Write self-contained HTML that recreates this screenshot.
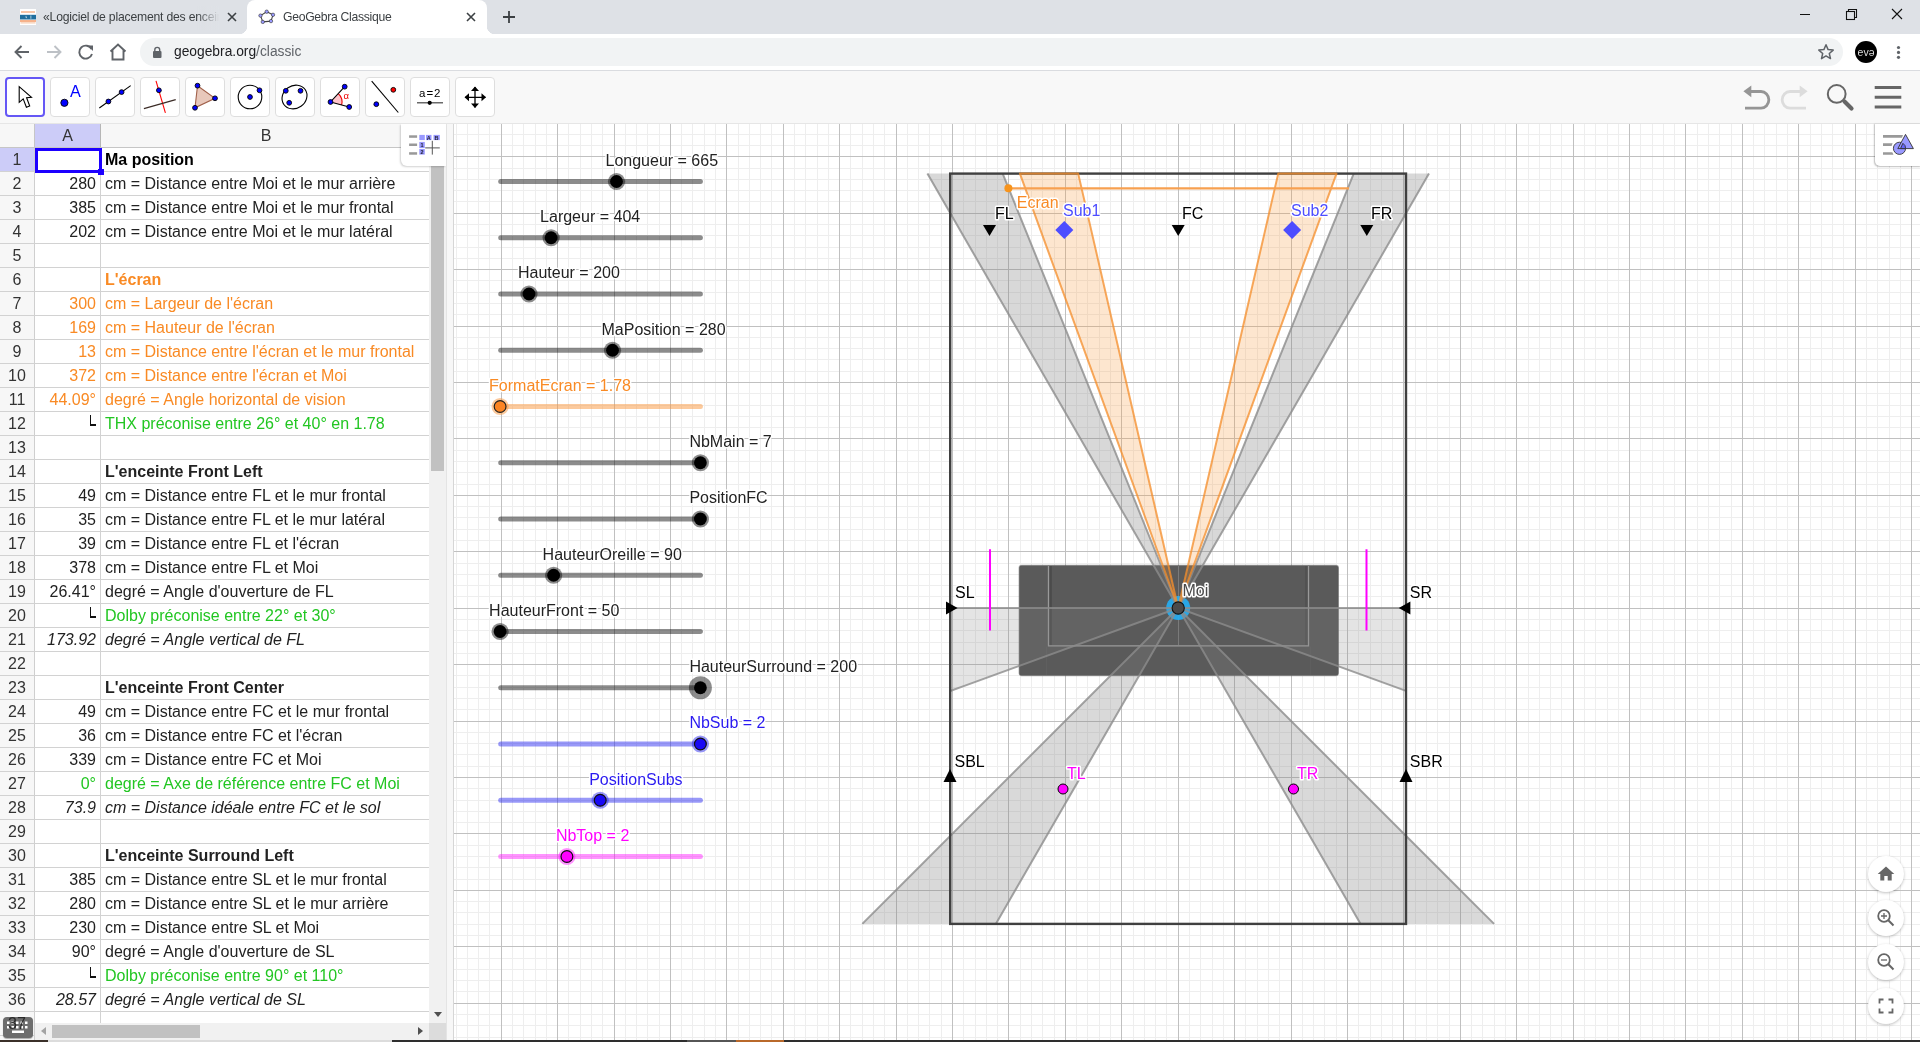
<!DOCTYPE html>
<html><head><meta charset="utf-8"><title>GeoGebra Classique</title>
<style>
html,body{margin:0;padding:0;width:1920px;height:1042px;overflow:hidden;background:#fff;position:relative;font-family:'Liberation Sans', sans-serif}
body>div,body>svg{will-change:transform}
</style></head><body>

<div style="position:absolute;left:0;top:0;width:1920px;height:34px;background:#dee1e6"></div>
<!-- tab1 -->
<svg style="position:absolute;left:20px;top:9px" width="16" height="16" viewBox="0 0 16 16"><rect width="16" height="16" fill="#fff"/><rect x="1" y="2.2" width="14" height="1.6" fill="#f6b894"/><path d="M0 5.8H16V10.5H0Z" fill="#1f6e9e"/><path d="M6 6.5L7.2 9.5L5.4 8.2Z M10.5 6.5H11.3V9.8H10.5Z" fill="#fff" opacity=".8"/><rect x="0" y="11.3" width="16" height="1.4" fill="#f3925a"/><rect x="0.5" y="13.4" width="15" height="1" fill="#f6c09e"/></svg>
<div style="position:absolute;left:43px;top:8px;width:176px;height:18px;overflow:hidden;font:12.2px 'Liberation Sans', sans-serif;color:#3c4043;white-space:nowrap;line-height:18px;letter-spacing:-0.2px">«Logiciel de placement des enceintes</div>
<div style="position:absolute;left:197px;top:6px;width:24px;height:24px;background:linear-gradient(90deg,rgba(222,225,230,0),#dee1e6 92%)"></div>
<svg style="position:absolute;left:225px;top:10px" width="14" height="14" viewBox="0 0 14 14"><path d="M3 3L11 11M11 3L3 11" stroke="#3c4043" stroke-width="1.6"/></svg>
<!-- active tab -->
<div style="position:absolute;left:247px;top:0px;width:240px;height:34px;background:#fff;border-radius:8px 8px 0 0"></div>
<div style="position:absolute;left:239px;top:26px;width:8px;height:8px;background:radial-gradient(circle at 0 0,#dee1e6 8px,#fff 8.5px)"></div>
<div style="position:absolute;left:487px;top:26px;width:8px;height:8px;background:radial-gradient(circle at 100% 0,#dee1e6 8px,#fff 8.5px)"></div>
<svg style="position:absolute;left:258px;top:9px" width="18" height="17" viewBox="0 0 18 17"><path d="M8.7 2.7L15 5.8L13 12.1L4.8 12.9L2.5 6.6Z" fill="none" stroke="#444" stroke-width="1.1" stroke-linejoin="round"/><g fill="#9a9aff" stroke="#333" stroke-width=".6"><circle cx="8.7" cy="2.7" r="1.7"/><circle cx="15" cy="5.8" r="1.7"/><circle cx="13" cy="12.1" r="1.7"/><circle cx="4.8" cy="12.9" r="1.7"/><circle cx="2.5" cy="6.6" r="1.7"/></g></svg>
<div style="position:absolute;left:283px;top:8px;font:12.2px 'Liberation Sans', sans-serif;color:#3c4043;white-space:nowrap;line-height:18px;letter-spacing:-0.3px">GeoGebra Classique</div>
<svg style="position:absolute;left:464px;top:10px" width="14" height="14" viewBox="0 0 14 14"><path d="M3 3L11 11M11 3L3 11" stroke="#3c4043" stroke-width="1.6"/></svg>
<svg style="position:absolute;left:501px;top:9px" width="16" height="16" viewBox="0 0 16 16"><path d="M8 2V14M2 8H14" stroke="#3c4043" stroke-width="1.8"/></svg>
<!-- window controls -->
<svg style="position:absolute;left:1795px;top:8px" width="20" height="20" viewBox="0 0 20 20"><path d="M5 6.5H15" stroke="#111" stroke-width="1"/></svg>
<svg style="position:absolute;left:1841px;top:5px" width="20" height="20" viewBox="0 0 20 20"><rect x="5.5" y="6.5" width="8" height="8" fill="none" stroke="#111" stroke-width="1.1"/><path d="M7.5 6.5V4.5H15.5V12.5H13.5" fill="none" stroke="#111" stroke-width="1.1"/></svg>
<svg style="position:absolute;left:1887px;top:4px" width="20" height="20" viewBox="0 0 20 20"><path d="M5 5L15 15M15 5L5 15" stroke="#111" stroke-width="1.1"/></svg>
<!-- address row -->
<div style="position:absolute;left:0;top:34px;width:1920px;height:36px;background:#fff"></div>
<div style="position:absolute;left:0;top:70px;width:1920px;height:1px;background:#dadce0"></div>
<svg style="position:absolute;left:10px;top:41px" width="24" height="22" viewBox="0 0 24 22"><path d="M19 11H5.5M11.5 5L5.5 11L11.5 17" fill="none" stroke="#5f6368" stroke-width="1.9"/></svg>
<svg style="position:absolute;left:42px;top:41px" width="24" height="22" viewBox="0 0 24 22"><path d="M5 11H18.5M12.5 5L18.5 11L12.5 17" fill="none" stroke="#bdc1c6" stroke-width="1.9"/></svg>
<svg style="position:absolute;left:74px;top:40px" width="24" height="24" viewBox="0 0 24 24"><path d="M17.6 9.2A6.5 6.5 0 1 0 18 14" fill="none" stroke="#5f6368" stroke-width="1.9"/><path d="M13.5 5.5H19V11Z" fill="#5f6368"/></svg>
<svg style="position:absolute;left:106px;top:40px" width="24" height="24" viewBox="0 0 24 24"><path d="M4.5 11.5L12 4.5L19.5 11.5M6.5 10V19.5H17.5V10" fill="none" stroke="#5f6368" stroke-width="1.9"/></svg>
<div style="position:absolute;left:140px;top:38px;width:1703px;height:28px;background:#f1f3f4;border-radius:14px"></div>
<svg style="position:absolute;left:150px;top:45px" width="14" height="14" viewBox="0 0 14 14"><rect x="3" y="6" width="8.5" height="7" rx="1" fill="#5f6368"/><path d="M4.8 6.5V4.8A2.45 2.45 0 0 1 9.7 4.8V6.5" fill="none" stroke="#5f6368" stroke-width="1.4"/></svg>
<div style="position:absolute;left:174px;top:43px;font:13.8px 'Liberation Sans', sans-serif;color:#202124;white-space:nowrap;line-height:18px">geogebra.org<span style="color:#5f6368">/classic</span></div>
<svg style="position:absolute;left:1816px;top:42px" width="20" height="20" viewBox="0 0 20 20"><path d="M10 2.8L12.1 7.6L17.2 8.1L13.3 11.5L14.5 16.6L10 13.9L5.5 16.6L6.7 11.5L2.8 8.1L7.9 7.6Z" fill="none" stroke="#5f6368" stroke-width="1.5" stroke-linejoin="round"/></svg>
<svg style="position:absolute;left:1855px;top:41px" width="22" height="22" viewBox="0 0 22 22"><circle cx="11" cy="11" r="11" fill="#000"/><g font-family="Liberation Sans" font-size="10.5" fill="#dcdcdc"><text x="2.6" y="14.6">e</text><text x="8.4" y="14.6">v</text><text x="-19.6" y="-9.1" transform="scale(-1,-1)">e</text></g></svg>
<svg style="position:absolute;left:1893px;top:42px" width="12" height="20" viewBox="0 0 12 20"><g fill="#5f6368"><circle cx="5.5" cy="5.5" r="1.6"/><circle cx="5.5" cy="10.4" r="1.6"/><circle cx="5.5" cy="15.3" r="1.6"/></g></svg>
<div style="position:absolute;left:0;top:71px;width:1920px;height:52px;background:#f8f8f8"></div><div style="position:absolute;left:0;top:123px;width:1920px;height:1px;background:#e6e6e6"></div><div style="position:absolute;left:5px;top:77px;width:35.5px;height:35.5px;border:2px solid #6557f5;border-radius:4px;background:#fff"></div><div style="position:absolute;left:50px;top:77px;width:37.5px;height:37.5px;border:1px solid #dedede;border-radius:4px;background:#fff"></div><div style="position:absolute;left:95px;top:77px;width:37.5px;height:37.5px;border:1px solid #dedede;border-radius:4px;background:#fff"></div><div style="position:absolute;left:140px;top:77px;width:37.5px;height:37.5px;border:1px solid #dedede;border-radius:4px;background:#fff"></div><div style="position:absolute;left:185px;top:77px;width:37.5px;height:37.5px;border:1px solid #dedede;border-radius:4px;background:#fff"></div><div style="position:absolute;left:230px;top:77px;width:37.5px;height:37.5px;border:1px solid #dedede;border-radius:4px;background:#fff"></div><div style="position:absolute;left:275px;top:77px;width:37.5px;height:37.5px;border:1px solid #dedede;border-radius:4px;background:#fff"></div><div style="position:absolute;left:320px;top:77px;width:37.5px;height:37.5px;border:1px solid #dedede;border-radius:4px;background:#fff"></div><div style="position:absolute;left:365px;top:77px;width:37.5px;height:37.5px;border:1px solid #dedede;border-radius:4px;background:#fff"></div><div style="position:absolute;left:410px;top:77px;width:37.5px;height:37.5px;border:1px solid #dedede;border-radius:4px;background:#fff"></div><div style="position:absolute;left:455px;top:77px;width:37.5px;height:37.5px;border:1px solid #dedede;border-radius:4px;background:#fff"></div><svg style="position:absolute;left:0;top:71px" width="1920" height="52" viewBox="0 71 1920 52"><path d="M19.2 86.6V102.4L23.2 98.9L26.4 107.3L29.7 106L26.6 97.8L31.5 97.4Z" fill="#fff" stroke="#000" stroke-width="1.1" stroke-linejoin="miter"/><circle cx="64.4" cy="102.8" r="3.6" fill="#0000ff" stroke="#000" stroke-width="0.9"/><text x="69.9" y="96.9" font-family="'Liberation Sans', sans-serif" font-size="16.2" fill="#0000ff">A</text><path d="M99.3 108L130.7 85.6" stroke="#000" stroke-width="1.1"/><circle cx="108.4" cy="101.5" r="2.4" fill="#0000ff" stroke="#000" stroke-width="0.9"/><circle cx="121.6" cy="92.1" r="2.4" fill="#0000ff" stroke="#000" stroke-width="0.9"/><path d="M156 80.9L165.4 112.8" stroke="#ff0000" stroke-width="1.1"/><path d="M143.9 108.6L175.7 99.6" stroke="#3a2a25" stroke-width="1.1"/><circle cx="158.9" cy="90.3" r="2.4" fill="#0000ff" stroke="#000" stroke-width="0.9"/><path d="M197.5 85.7L215 98.3L195 107.8Z" fill="#e8c8bb" stroke="#a0604a" stroke-width="1.1"/><circle cx="197.5" cy="85.7" r="2.4" fill="#0000ff" stroke="#000" stroke-width="0.9"/><circle cx="215" cy="98.3" r="2.4" fill="#0000ff" stroke="#000" stroke-width="0.9"/><circle cx="195" cy="107.8" r="2.4" fill="#0000ff" stroke="#000" stroke-width="0.9"/><circle cx="250" cy="97" r="11.8" fill="none" stroke="#000" stroke-width="1.1"/><circle cx="250" cy="97" r="2.4" fill="#0000ff" stroke="#000" stroke-width="0.9"/><circle cx="259.5" cy="90.3" r="2.4" fill="#0000ff" stroke="#000" stroke-width="0.9"/><ellipse cx="294.5" cy="97" rx="13" ry="11.3" transform="rotate(-35 294.5 97)" fill="none" stroke="#000" stroke-width="1.1"/><circle cx="285.8" cy="90.8" r="2.4" fill="#0000ff" stroke="#000" stroke-width="0.9"/><circle cx="300.5" cy="90.8" r="2.4" fill="#0000ff" stroke="#000" stroke-width="0.9"/><circle cx="289.2" cy="102.8" r="2.4" fill="#0000ff" stroke="#000" stroke-width="0.9"/><path d="M330.5 102L338.3 93.6A11.5 11.5 0 0 1 341.6 105Z" fill="#ffc4cc"/><path d="M338.3 93.6A11.5 11.5 0 0 1 341.6 105" fill="none" stroke="#e00" stroke-width="1.1"/><path d="M344.7 86.7L330.5 102L349.2 107" fill="none" stroke="#000" stroke-width="1.1"/><circle cx="344.7" cy="86.7" r="2.4" fill="#0000ff" stroke="#000" stroke-width="0.9"/><circle cx="330.5" cy="102" r="2.4" fill="#0000ff" stroke="#000" stroke-width="0.9"/><circle cx="349.2" cy="107" r="2.4" fill="#0000ff" stroke="#000" stroke-width="0.9"/><text x="343.6" y="98.8" font-family="'Liberation Sans', sans-serif" font-size="9.5" fill="#e00">α</text><path d="M371.7 81.2L398.3 112.5" stroke="#000" stroke-width="1.1"/><circle cx="376.3" cy="104.2" r="2.4" fill="#0000ff" stroke="#000" stroke-width="0.9"/><circle cx="393.3" cy="89.8" r="2.4" fill="#ff0000" stroke="#000" stroke-width="0.9"/><text x="419" y="96.5" font-family="'Liberation Sans', sans-serif" font-size="11.5" fill="#000">a</text><text x="426.5" y="96.5" font-family="'Liberation Sans', sans-serif" font-size="11.5" fill="#000">=</text><text x="434" y="96.5" font-family="'Liberation Sans', sans-serif" font-size="11.5" fill="#000">2</text><path d="M417 102.8H443" stroke="#444" stroke-width="1.2"/><circle cx="429.7" cy="102.8" r="2.1" fill="#000"/><path d="M475 87V107.5M465 97.3H485.5" stroke="#000" stroke-width="1.3"/><path d="M475 86.5L471 91H479Z M475 108L471 103.5H479Z M464.5 97.3L469 93.3V101.3Z M486 97.3L481.5 93.3V101.3Z" fill="#000"/><path d="M1750 91.5H1761A7.8 8.3 0 0 1 1761 108.2H1745" fill="none" stroke="#959595" stroke-width="2.8"/><path d="M1743.4 91.3L1751.3 85.5V97.3Z" fill="#959595"/><path d="M1801 91.5H1790A7.8 8.3 0 0 0 1790 108.2H1806" fill="none" stroke="#dcdcdc" stroke-width="2.8"/><path d="M1807.6 91.3L1799.7 85.5V97.3Z" fill="#dcdcdc"/><circle cx="1836.7" cy="93.9" r="8.9" fill="none" stroke="#666" stroke-width="2"/><path d="M1844.5 101.5L1851.5 108.5" stroke="#666" stroke-width="4.2" stroke-linecap="round"/><path d="M1874.7 87.6H1901.3M1874.7 97.3H1901.3M1874.7 107.1H1901.3" stroke="#666" stroke-width="3"/></svg><div style="position:absolute;left:0;top:124px;width:454px;height:916px;background:#fff;overflow:hidden"><div style="position:absolute;left:0;top:0;width:429px;height:23px;background:#f7f7f7"></div><div style="position:absolute;left:35px;top:0;width:65px;height:23px;background:#ccccf8"></div><div style="position:absolute;left:0;top:23px;width:429px;height:1px;background:#c6c6c6"></div><div style="position:absolute;left:34px;top:0;width:1px;height:23px;background:#c6c6c6"></div><div style="position:absolute;left:100px;top:0;width:1px;height:23px;background:#b6b6b6"></div><div style="position:absolute;left:35px;top:0;width:65px;height:23px;font:16px 'Liberation Sans', sans-serif;color:#333;text-align:center;line-height:23px">A</div><div style="position:absolute;left:101px;top:0;width:330px;height:23px;font:16px 'Liberation Sans', sans-serif;color:#333;text-align:center;line-height:23px">B</div><div style="position:absolute;left:0;top:24px;width:34px;height:900px;background:#f7f7f7"></div><div style="position:absolute;left:0;top:24px;width:34px;height:23px;background:#ccccf8"></div><div style="position:absolute;left:34px;top:24px;width:1px;height:900px;background:#cfcfcf"></div><div style="position:absolute;left:100px;top:24px;width:1px;height:900px;background:#d2d2d2"></div><div style="position:absolute;left:0;top:47px;width:429px;height:1px;background:#d2d2d2"></div><div style="position:absolute;left:0;top:24px;width:34px;height:23px;font:16px 'Liberation Sans', sans-serif;color:#333;text-align:center;line-height:24px">1</div><div style="position:absolute;left:105px;top:24px;height:23px;font:16px 'Liberation Sans', sans-serif;font-weight:bold;color:#000;line-height:24px;white-space:nowrap">Ma position</div><div style="position:absolute;left:0;top:71px;width:429px;height:1px;background:#d2d2d2"></div><div style="position:absolute;left:0;top:48px;width:34px;height:23px;font:16px 'Liberation Sans', sans-serif;color:#333;text-align:center;line-height:24px">2</div><div style="position:absolute;left:35px;top:48px;width:61px;height:23px;font:16px 'Liberation Sans', sans-serif;color:#222;text-align:right;line-height:24px;white-space:nowrap">280</div><div style="position:absolute;left:105px;top:48px;height:23px;font:16px 'Liberation Sans', sans-serif;color:#222;line-height:24px;white-space:nowrap">cm = Distance entre Moi et le mur arrière</div><div style="position:absolute;left:0;top:95px;width:429px;height:1px;background:#d2d2d2"></div><div style="position:absolute;left:0;top:72px;width:34px;height:23px;font:16px 'Liberation Sans', sans-serif;color:#333;text-align:center;line-height:24px">3</div><div style="position:absolute;left:35px;top:72px;width:61px;height:23px;font:16px 'Liberation Sans', sans-serif;color:#222;text-align:right;line-height:24px;white-space:nowrap">385</div><div style="position:absolute;left:105px;top:72px;height:23px;font:16px 'Liberation Sans', sans-serif;color:#222;line-height:24px;white-space:nowrap">cm = Distance entre Moi et le mur frontal</div><div style="position:absolute;left:0;top:119px;width:429px;height:1px;background:#d2d2d2"></div><div style="position:absolute;left:0;top:96px;width:34px;height:23px;font:16px 'Liberation Sans', sans-serif;color:#333;text-align:center;line-height:24px">4</div><div style="position:absolute;left:35px;top:96px;width:61px;height:23px;font:16px 'Liberation Sans', sans-serif;color:#222;text-align:right;line-height:24px;white-space:nowrap">202</div><div style="position:absolute;left:105px;top:96px;height:23px;font:16px 'Liberation Sans', sans-serif;color:#222;line-height:24px;white-space:nowrap">cm = Distance entre Moi et le mur latéral</div><div style="position:absolute;left:0;top:143px;width:429px;height:1px;background:#d2d2d2"></div><div style="position:absolute;left:0;top:120px;width:34px;height:23px;font:16px 'Liberation Sans', sans-serif;color:#333;text-align:center;line-height:24px">5</div><div style="position:absolute;left:0;top:167px;width:429px;height:1px;background:#d2d2d2"></div><div style="position:absolute;left:0;top:144px;width:34px;height:23px;font:16px 'Liberation Sans', sans-serif;color:#333;text-align:center;line-height:24px">6</div><div style="position:absolute;left:105px;top:144px;height:23px;font:16px 'Liberation Sans', sans-serif;font-weight:bold;color:#f98a24;line-height:24px;white-space:nowrap">L'écran</div><div style="position:absolute;left:0;top:191px;width:429px;height:1px;background:#d2d2d2"></div><div style="position:absolute;left:0;top:168px;width:34px;height:23px;font:16px 'Liberation Sans', sans-serif;color:#333;text-align:center;line-height:24px">7</div><div style="position:absolute;left:35px;top:168px;width:61px;height:23px;font:16px 'Liberation Sans', sans-serif;color:#f98a24;text-align:right;line-height:24px;white-space:nowrap">300</div><div style="position:absolute;left:105px;top:168px;height:23px;font:16px 'Liberation Sans', sans-serif;color:#f98a24;line-height:24px;white-space:nowrap">cm = Largeur de l'écran</div><div style="position:absolute;left:0;top:215px;width:429px;height:1px;background:#d2d2d2"></div><div style="position:absolute;left:0;top:192px;width:34px;height:23px;font:16px 'Liberation Sans', sans-serif;color:#333;text-align:center;line-height:24px">8</div><div style="position:absolute;left:35px;top:192px;width:61px;height:23px;font:16px 'Liberation Sans', sans-serif;color:#f98a24;text-align:right;line-height:24px;white-space:nowrap">169</div><div style="position:absolute;left:105px;top:192px;height:23px;font:16px 'Liberation Sans', sans-serif;color:#f98a24;line-height:24px;white-space:nowrap">cm = Hauteur de l'écran</div><div style="position:absolute;left:0;top:239px;width:429px;height:1px;background:#d2d2d2"></div><div style="position:absolute;left:0;top:216px;width:34px;height:23px;font:16px 'Liberation Sans', sans-serif;color:#333;text-align:center;line-height:24px">9</div><div style="position:absolute;left:35px;top:216px;width:61px;height:23px;font:16px 'Liberation Sans', sans-serif;color:#f98a24;text-align:right;line-height:24px;white-space:nowrap">13</div><div style="position:absolute;left:105px;top:216px;height:23px;font:16px 'Liberation Sans', sans-serif;color:#f98a24;line-height:24px;white-space:nowrap">cm = Distance entre l'écran et le mur frontal</div><div style="position:absolute;left:0;top:263px;width:429px;height:1px;background:#d2d2d2"></div><div style="position:absolute;left:0;top:240px;width:34px;height:23px;font:16px 'Liberation Sans', sans-serif;color:#333;text-align:center;line-height:24px">10</div><div style="position:absolute;left:35px;top:240px;width:61px;height:23px;font:16px 'Liberation Sans', sans-serif;color:#f98a24;text-align:right;line-height:24px;white-space:nowrap">372</div><div style="position:absolute;left:105px;top:240px;height:23px;font:16px 'Liberation Sans', sans-serif;color:#f98a24;line-height:24px;white-space:nowrap">cm = Distance entre l'écran et Moi</div><div style="position:absolute;left:0;top:287px;width:429px;height:1px;background:#d2d2d2"></div><div style="position:absolute;left:0;top:264px;width:34px;height:23px;font:16px 'Liberation Sans', sans-serif;color:#333;text-align:center;line-height:24px">11</div><div style="position:absolute;left:35px;top:264px;width:61px;height:23px;font:16px 'Liberation Sans', sans-serif;color:#f98a24;text-align:right;line-height:24px;white-space:nowrap">44.09°</div><div style="position:absolute;left:105px;top:264px;height:23px;font:16px 'Liberation Sans', sans-serif;color:#f98a24;line-height:24px;white-space:nowrap">degré = Angle horizontal de vision</div><div style="position:absolute;left:0;top:311px;width:429px;height:1px;background:#d2d2d2"></div><div style="position:absolute;left:0;top:288px;width:34px;height:23px;font:16px 'Liberation Sans', sans-serif;color:#333;text-align:center;line-height:24px">12</div><div style="position:absolute;left:89.7px;top:291px;width:1.6px;height:10.5px;background:#111"></div><div style="position:absolute;left:89.7px;top:300px;width:6.3px;height:1.6px;background:#111"></div><div style="position:absolute;left:105px;top:288px;height:23px;font:16px 'Liberation Sans', sans-serif;color:#22c622;line-height:24px;white-space:nowrap">THX préconise entre 26° et 40° en 1.78</div><div style="position:absolute;left:0;top:335px;width:429px;height:1px;background:#d2d2d2"></div><div style="position:absolute;left:0;top:312px;width:34px;height:23px;font:16px 'Liberation Sans', sans-serif;color:#333;text-align:center;line-height:24px">13</div><div style="position:absolute;left:0;top:359px;width:429px;height:1px;background:#d2d2d2"></div><div style="position:absolute;left:0;top:336px;width:34px;height:23px;font:16px 'Liberation Sans', sans-serif;color:#333;text-align:center;line-height:24px">14</div><div style="position:absolute;left:105px;top:336px;height:23px;font:16px 'Liberation Sans', sans-serif;font-weight:bold;color:#222;line-height:24px;white-space:nowrap">L'enceinte Front Left</div><div style="position:absolute;left:0;top:383px;width:429px;height:1px;background:#d2d2d2"></div><div style="position:absolute;left:0;top:360px;width:34px;height:23px;font:16px 'Liberation Sans', sans-serif;color:#333;text-align:center;line-height:24px">15</div><div style="position:absolute;left:35px;top:360px;width:61px;height:23px;font:16px 'Liberation Sans', sans-serif;color:#222;text-align:right;line-height:24px;white-space:nowrap">49</div><div style="position:absolute;left:105px;top:360px;height:23px;font:16px 'Liberation Sans', sans-serif;color:#222;line-height:24px;white-space:nowrap">cm = Distance entre FL et le mur frontal</div><div style="position:absolute;left:0;top:407px;width:429px;height:1px;background:#d2d2d2"></div><div style="position:absolute;left:0;top:384px;width:34px;height:23px;font:16px 'Liberation Sans', sans-serif;color:#333;text-align:center;line-height:24px">16</div><div style="position:absolute;left:35px;top:384px;width:61px;height:23px;font:16px 'Liberation Sans', sans-serif;color:#222;text-align:right;line-height:24px;white-space:nowrap">35</div><div style="position:absolute;left:105px;top:384px;height:23px;font:16px 'Liberation Sans', sans-serif;color:#222;line-height:24px;white-space:nowrap">cm = Distance entre FL et le mur latéral</div><div style="position:absolute;left:0;top:431px;width:429px;height:1px;background:#d2d2d2"></div><div style="position:absolute;left:0;top:408px;width:34px;height:23px;font:16px 'Liberation Sans', sans-serif;color:#333;text-align:center;line-height:24px">17</div><div style="position:absolute;left:35px;top:408px;width:61px;height:23px;font:16px 'Liberation Sans', sans-serif;color:#222;text-align:right;line-height:24px;white-space:nowrap">39</div><div style="position:absolute;left:105px;top:408px;height:23px;font:16px 'Liberation Sans', sans-serif;color:#222;line-height:24px;white-space:nowrap">cm = Distance entre FL et l'écran</div><div style="position:absolute;left:0;top:455px;width:429px;height:1px;background:#d2d2d2"></div><div style="position:absolute;left:0;top:432px;width:34px;height:23px;font:16px 'Liberation Sans', sans-serif;color:#333;text-align:center;line-height:24px">18</div><div style="position:absolute;left:35px;top:432px;width:61px;height:23px;font:16px 'Liberation Sans', sans-serif;color:#222;text-align:right;line-height:24px;white-space:nowrap">378</div><div style="position:absolute;left:105px;top:432px;height:23px;font:16px 'Liberation Sans', sans-serif;color:#222;line-height:24px;white-space:nowrap">cm = Distance entre FL et Moi</div><div style="position:absolute;left:0;top:479px;width:429px;height:1px;background:#d2d2d2"></div><div style="position:absolute;left:0;top:456px;width:34px;height:23px;font:16px 'Liberation Sans', sans-serif;color:#333;text-align:center;line-height:24px">19</div><div style="position:absolute;left:35px;top:456px;width:61px;height:23px;font:16px 'Liberation Sans', sans-serif;color:#222;text-align:right;line-height:24px;white-space:nowrap">26.41°</div><div style="position:absolute;left:105px;top:456px;height:23px;font:16px 'Liberation Sans', sans-serif;color:#222;line-height:24px;white-space:nowrap">degré = Angle d'ouverture de FL</div><div style="position:absolute;left:0;top:503px;width:429px;height:1px;background:#d2d2d2"></div><div style="position:absolute;left:0;top:480px;width:34px;height:23px;font:16px 'Liberation Sans', sans-serif;color:#333;text-align:center;line-height:24px">20</div><div style="position:absolute;left:89.7px;top:483px;width:1.6px;height:10.5px;background:#111"></div><div style="position:absolute;left:89.7px;top:492px;width:6.3px;height:1.6px;background:#111"></div><div style="position:absolute;left:105px;top:480px;height:23px;font:16px 'Liberation Sans', sans-serif;color:#22c622;line-height:24px;white-space:nowrap">Dolby préconise entre 22° et 30°</div><div style="position:absolute;left:0;top:527px;width:429px;height:1px;background:#d2d2d2"></div><div style="position:absolute;left:0;top:504px;width:34px;height:23px;font:16px 'Liberation Sans', sans-serif;color:#333;text-align:center;line-height:24px">21</div><div style="position:absolute;left:35px;top:504px;width:61px;height:23px;font:16px 'Liberation Sans', sans-serif;font-style:italic;color:#222;text-align:right;line-height:24px;white-space:nowrap">173.92</div><div style="position:absolute;left:105px;top:504px;height:23px;font:16px 'Liberation Sans', sans-serif;font-style:italic;color:#222;line-height:24px;white-space:nowrap">degré = Angle vertical de FL</div><div style="position:absolute;left:0;top:551px;width:429px;height:1px;background:#d2d2d2"></div><div style="position:absolute;left:0;top:528px;width:34px;height:23px;font:16px 'Liberation Sans', sans-serif;color:#333;text-align:center;line-height:24px">22</div><div style="position:absolute;left:0;top:575px;width:429px;height:1px;background:#d2d2d2"></div><div style="position:absolute;left:0;top:552px;width:34px;height:23px;font:16px 'Liberation Sans', sans-serif;color:#333;text-align:center;line-height:24px">23</div><div style="position:absolute;left:105px;top:552px;height:23px;font:16px 'Liberation Sans', sans-serif;font-weight:bold;color:#222;line-height:24px;white-space:nowrap">L'enceinte Front Center</div><div style="position:absolute;left:0;top:599px;width:429px;height:1px;background:#d2d2d2"></div><div style="position:absolute;left:0;top:576px;width:34px;height:23px;font:16px 'Liberation Sans', sans-serif;color:#333;text-align:center;line-height:24px">24</div><div style="position:absolute;left:35px;top:576px;width:61px;height:23px;font:16px 'Liberation Sans', sans-serif;color:#222;text-align:right;line-height:24px;white-space:nowrap">49</div><div style="position:absolute;left:105px;top:576px;height:23px;font:16px 'Liberation Sans', sans-serif;color:#222;line-height:24px;white-space:nowrap">cm = Distance entre FC et le mur frontal</div><div style="position:absolute;left:0;top:623px;width:429px;height:1px;background:#d2d2d2"></div><div style="position:absolute;left:0;top:600px;width:34px;height:23px;font:16px 'Liberation Sans', sans-serif;color:#333;text-align:center;line-height:24px">25</div><div style="position:absolute;left:35px;top:600px;width:61px;height:23px;font:16px 'Liberation Sans', sans-serif;color:#222;text-align:right;line-height:24px;white-space:nowrap">36</div><div style="position:absolute;left:105px;top:600px;height:23px;font:16px 'Liberation Sans', sans-serif;color:#222;line-height:24px;white-space:nowrap">cm = Distance entre FC et l'écran</div><div style="position:absolute;left:0;top:647px;width:429px;height:1px;background:#d2d2d2"></div><div style="position:absolute;left:0;top:624px;width:34px;height:23px;font:16px 'Liberation Sans', sans-serif;color:#333;text-align:center;line-height:24px">26</div><div style="position:absolute;left:35px;top:624px;width:61px;height:23px;font:16px 'Liberation Sans', sans-serif;color:#222;text-align:right;line-height:24px;white-space:nowrap">339</div><div style="position:absolute;left:105px;top:624px;height:23px;font:16px 'Liberation Sans', sans-serif;color:#222;line-height:24px;white-space:nowrap">cm = Distance entre FC et Moi</div><div style="position:absolute;left:0;top:671px;width:429px;height:1px;background:#d2d2d2"></div><div style="position:absolute;left:0;top:648px;width:34px;height:23px;font:16px 'Liberation Sans', sans-serif;color:#333;text-align:center;line-height:24px">27</div><div style="position:absolute;left:35px;top:648px;width:61px;height:23px;font:16px 'Liberation Sans', sans-serif;color:#22c622;text-align:right;line-height:24px;white-space:nowrap">0°</div><div style="position:absolute;left:105px;top:648px;height:23px;font:16px 'Liberation Sans', sans-serif;color:#22c622;line-height:24px;white-space:nowrap">degré = Axe de référence entre FC et Moi</div><div style="position:absolute;left:0;top:695px;width:429px;height:1px;background:#d2d2d2"></div><div style="position:absolute;left:0;top:672px;width:34px;height:23px;font:16px 'Liberation Sans', sans-serif;color:#333;text-align:center;line-height:24px">28</div><div style="position:absolute;left:35px;top:672px;width:61px;height:23px;font:16px 'Liberation Sans', sans-serif;font-style:italic;color:#222;text-align:right;line-height:24px;white-space:nowrap">73.9</div><div style="position:absolute;left:105px;top:672px;height:23px;font:16px 'Liberation Sans', sans-serif;font-style:italic;color:#222;line-height:24px;white-space:nowrap">cm = Distance idéale entre FC et le sol</div><div style="position:absolute;left:0;top:719px;width:429px;height:1px;background:#d2d2d2"></div><div style="position:absolute;left:0;top:696px;width:34px;height:23px;font:16px 'Liberation Sans', sans-serif;color:#333;text-align:center;line-height:24px">29</div><div style="position:absolute;left:0;top:743px;width:429px;height:1px;background:#d2d2d2"></div><div style="position:absolute;left:0;top:720px;width:34px;height:23px;font:16px 'Liberation Sans', sans-serif;color:#333;text-align:center;line-height:24px">30</div><div style="position:absolute;left:105px;top:720px;height:23px;font:16px 'Liberation Sans', sans-serif;font-weight:bold;color:#222;line-height:24px;white-space:nowrap">L'enceinte Surround Left</div><div style="position:absolute;left:0;top:767px;width:429px;height:1px;background:#d2d2d2"></div><div style="position:absolute;left:0;top:744px;width:34px;height:23px;font:16px 'Liberation Sans', sans-serif;color:#333;text-align:center;line-height:24px">31</div><div style="position:absolute;left:35px;top:744px;width:61px;height:23px;font:16px 'Liberation Sans', sans-serif;color:#222;text-align:right;line-height:24px;white-space:nowrap">385</div><div style="position:absolute;left:105px;top:744px;height:23px;font:16px 'Liberation Sans', sans-serif;color:#222;line-height:24px;white-space:nowrap">cm = Distance entre SL et le mur frontal</div><div style="position:absolute;left:0;top:791px;width:429px;height:1px;background:#d2d2d2"></div><div style="position:absolute;left:0;top:768px;width:34px;height:23px;font:16px 'Liberation Sans', sans-serif;color:#333;text-align:center;line-height:24px">32</div><div style="position:absolute;left:35px;top:768px;width:61px;height:23px;font:16px 'Liberation Sans', sans-serif;color:#222;text-align:right;line-height:24px;white-space:nowrap">280</div><div style="position:absolute;left:105px;top:768px;height:23px;font:16px 'Liberation Sans', sans-serif;color:#222;line-height:24px;white-space:nowrap">cm = Distance entre SL et le mur arrière</div><div style="position:absolute;left:0;top:815px;width:429px;height:1px;background:#d2d2d2"></div><div style="position:absolute;left:0;top:792px;width:34px;height:23px;font:16px 'Liberation Sans', sans-serif;color:#333;text-align:center;line-height:24px">33</div><div style="position:absolute;left:35px;top:792px;width:61px;height:23px;font:16px 'Liberation Sans', sans-serif;color:#222;text-align:right;line-height:24px;white-space:nowrap">230</div><div style="position:absolute;left:105px;top:792px;height:23px;font:16px 'Liberation Sans', sans-serif;color:#222;line-height:24px;white-space:nowrap">cm = Distance entre SL et Moi</div><div style="position:absolute;left:0;top:839px;width:429px;height:1px;background:#d2d2d2"></div><div style="position:absolute;left:0;top:816px;width:34px;height:23px;font:16px 'Liberation Sans', sans-serif;color:#333;text-align:center;line-height:24px">34</div><div style="position:absolute;left:35px;top:816px;width:61px;height:23px;font:16px 'Liberation Sans', sans-serif;color:#222;text-align:right;line-height:24px;white-space:nowrap">90°</div><div style="position:absolute;left:105px;top:816px;height:23px;font:16px 'Liberation Sans', sans-serif;color:#222;line-height:24px;white-space:nowrap">degré = Angle d'ouverture de SL</div><div style="position:absolute;left:0;top:863px;width:429px;height:1px;background:#d2d2d2"></div><div style="position:absolute;left:0;top:840px;width:34px;height:23px;font:16px 'Liberation Sans', sans-serif;color:#333;text-align:center;line-height:24px">35</div><div style="position:absolute;left:89.7px;top:843px;width:1.6px;height:10.5px;background:#111"></div><div style="position:absolute;left:89.7px;top:852px;width:6.3px;height:1.6px;background:#111"></div><div style="position:absolute;left:105px;top:840px;height:23px;font:16px 'Liberation Sans', sans-serif;color:#22c622;line-height:24px;white-space:nowrap">Dolby préconise entre 90° et 110°</div><div style="position:absolute;left:0;top:887px;width:429px;height:1px;background:#d2d2d2"></div><div style="position:absolute;left:0;top:864px;width:34px;height:23px;font:16px 'Liberation Sans', sans-serif;color:#333;text-align:center;line-height:24px">36</div><div style="position:absolute;left:35px;top:864px;width:61px;height:23px;font:16px 'Liberation Sans', sans-serif;font-style:italic;color:#222;text-align:right;line-height:24px;white-space:nowrap">28.57</div><div style="position:absolute;left:105px;top:864px;height:23px;font:16px 'Liberation Sans', sans-serif;font-style:italic;color:#222;line-height:24px;white-space:nowrap">degré = Angle vertical de SL</div><div style="position:absolute;left:0;top:911px;width:429px;height:1px;background:#d2d2d2"></div><div style="position:absolute;left:0;top:888px;width:34px;height:23px;font:16px 'Liberation Sans', sans-serif;color:#333;text-align:center;line-height:24px">37</div><div style="position:absolute;left:35px;top:24px;width:61px;height:19px;border:3px solid #1d00ff"></div><div style="position:absolute;left:98px;top:45px;width:6px;height:6px;background:#1d00ff"></div><div style="position:absolute;left:429px;top:24px;width:17px;height:900px;background:#f1f1f1"></div><div style="position:absolute;left:431px;top:42px;width:13px;height:305px;background:#c1c1c1"></div><div style="position:absolute;left:433.5px;top:887.5px;width:0;height:0;border-left:4.5px solid transparent;border-right:4.5px solid transparent;border-top:5px solid #505050"></div><div style="position:absolute;left:35px;top:899px;width:394px;height:17px;background:#f1f1f1"></div><div style="position:absolute;left:52px;top:901px;width:148px;height:12.5px;background:#c1c1c1"></div><div style="position:absolute;left:41px;top:903px;width:0;height:0;border-top:4.5px solid transparent;border-bottom:4.5px solid transparent;border-right:5px solid #a3a3a3"></div><div style="position:absolute;left:418px;top:903px;width:0;height:0;border-top:4.5px solid transparent;border-bottom:4.5px solid transparent;border-left:5px solid #505050"></div><div style="position:absolute;left:429px;top:899px;width:17px;height:17px;background:#dcdcdc"></div><div style="position:absolute;left:446px;top:0;width:8px;height:916px;background:#f7f7f7;border-left:1px solid #e4e4e4;border-right:1px solid #d6d6d6;box-sizing:border-box"></div><div style="position:absolute;left:401px;top:0;width:45px;height:42px;background:#fff;border-radius:0 0 0 6px;box-shadow:-1px 1px 2px rgba(0,0,0,.18)"></div><svg style="position:absolute;left:401px;top:0" width="45" height="42" viewBox="0 0 45 42"><g fill="#999"><rect x="8.1" y="11.3" width="8" height="2.5"/><rect x="8.1" y="19.5" width="8" height="2.5"/><rect x="8.1" y="28.2" width="8" height="2.5"/></g><g fill="#9999ff"><rect x="18.3" y="10.9" width="5.5" height="5.2"/><rect x="25" y="10.9" width="5.5" height="5.2"/><rect x="32.5" y="10.9" width="6.3" height="5.2"/><rect x="18.3" y="17.9" width="5.5" height="6.2"/><rect x="18.3" y="25" width="5.5" height="5.6"/></g><g font-family="Liberation Sans" font-weight="bold" font-size="5.5" fill="#223" text-anchor="middle"><text x="27.8" y="15.6">A</text><text x="35.6" y="15.6">B</text><text x="21" y="23">1</text><text x="21" y="30">2</text></g><path d="M24.2 23.9H38.8M31.3 16.8V30.6" stroke="#555" stroke-width="1"/></svg><div style="position:absolute;left:3px;top:893px;width:30px;height:21px;background:#6d6d6d;border-radius:4px;box-shadow:0 1px 1px rgba(0,0,0,.3)"></div><svg style="position:absolute;left:3px;top:893px" width="30" height="21" viewBox="0 0 30 21"><g fill="#fff"><rect x="4" y="4.5" width="2.5" height="2.5"/><rect x="8.5" y="4.5" width="2.5" height="2.5"/><rect x="13" y="4.5" width="2.5" height="2.5"/><rect x="17.5" y="4.5" width="2.5" height="2.5"/><rect x="22" y="4.5" width="2.5" height="2.5"/><rect x="4" y="9" width="2.5" height="2.5"/><rect x="8.5" y="9" width="2.5" height="2.5"/><rect x="13" y="9" width="2.5" height="2.5"/><rect x="17.5" y="9" width="2.5" height="2.5"/><rect x="22" y="9" width="2.5" height="2.5"/><rect x="9" y="13.5" width="12" height="2.5"/></g></svg><div style="position:absolute;left:0;top:888px;width:34px;height:23px;font:16px 'Liberation Sans', sans-serif;color:#222;text-align:center;line-height:24px;opacity:.9">37</div></div><svg style="position:absolute;left:454px;top:124px" width="1466" height="916" viewBox="454 124 1466 916"><rect x="454" y="124" width="1466" height="916" fill="#fff"/><path d="M456.5 124V1040M467.5 124V1040M478.5 124V1040M489.5 124V1040M512.5 124V1040M523.5 124V1040M535.5 124V1040M546.5 124V1040M568.5 124V1040M580.5 124V1040M591.5 124V1040M602.5 124V1040M625.5 124V1040M636.5 124V1040M647.5 124V1040M659.5 124V1040M681.5 124V1040M692.5 124V1040M704.5 124V1040M715.5 124V1040M738.5 124V1040M749.5 124V1040M760.5 124V1040M771.5 124V1040M794.5 124V1040M805.5 124V1040M817.5 124V1040M828.5 124V1040M850.5 124V1040M862.5 124V1040M873.5 124V1040M884.5 124V1040M907.5 124V1040M918.5 124V1040M929.5 124V1040M941.5 124V1040M963.5 124V1040M975.5 124V1040M986.5 124V1040M997.5 124V1040M1020.5 124V1040M1031.5 124V1040M1042.5 124V1040M1054.5 124V1040M1076.5 124V1040M1087.5 124V1040M1099.5 124V1040M1110.5 124V1040M1133.5 124V1040M1144.5 124V1040M1155.5 124V1040M1166.5 124V1040M1189.5 124V1040M1200.5 124V1040M1212.5 124V1040M1223.5 124V1040M1245.5 124V1040M1257.5 124V1040M1268.5 124V1040M1279.5 124V1040M1302.5 124V1040M1313.5 124V1040M1324.5 124V1040M1336.5 124V1040M1358.5 124V1040M1370.5 124V1040M1381.5 124V1040M1392.5 124V1040M1415.5 124V1040M1426.5 124V1040M1437.5 124V1040M1449.5 124V1040M1471.5 124V1040M1482.5 124V1040M1494.5 124V1040M1505.5 124V1040M1528.5 124V1040M1539.5 124V1040M1550.5 124V1040M1561.5 124V1040M1584.5 124V1040M1595.5 124V1040M1607.5 124V1040M1618.5 124V1040M1640.5 124V1040M1652.5 124V1040M1663.5 124V1040M1674.5 124V1040M1697.5 124V1040M1708.5 124V1040M1719.5 124V1040M1731.5 124V1040M1753.5 124V1040M1764.5 124V1040M1776.5 124V1040M1787.5 124V1040M1810.5 124V1040M1821.5 124V1040M1832.5 124V1040M1843.5 124V1040M1866.5 124V1040M1877.5 124V1040M1889.5 124V1040M1900.5 124V1040M454 134.5H1920M454 145.5H1920M454 168.5H1920M454 179.5H1920M454 190.5H1920M454 201.5H1920M454 224.5H1920M454 235.5H1920M454 247.5H1920M454 258.5H1920M454 280.5H1920M454 292.5H1920M454 303.5H1920M454 314.5H1920M454 337.5H1920M454 348.5H1920M454 359.5H1920M454 371.5H1920M454 393.5H1920M454 405.5H1920M454 416.5H1920M454 427.5H1920M454 450.5H1920M454 461.5H1920M454 472.5H1920M454 484.5H1920M454 506.5H1920M454 517.5H1920M454 529.5H1920M454 540.5H1920M454 563.5H1920M454 574.5H1920M454 585.5H1920M454 596.5H1920M454 619.5H1920M454 630.5H1920M454 642.5H1920M454 653.5H1920M454 675.5H1920M454 687.5H1920M454 698.5H1920M454 709.5H1920M454 732.5H1920M454 743.5H1920M454 754.5H1920M454 766.5H1920M454 788.5H1920M454 800.5H1920M454 811.5H1920M454 822.5H1920M454 845.5H1920M454 856.5H1920M454 867.5H1920M454 879.5H1920M454 901.5H1920M454 912.5H1920M454 924.5H1920M454 935.5H1920M454 958.5H1920M454 969.5H1920M454 980.5H1920M454 991.5H1920M454 1014.5H1920M454 1025.5H1920M454 1037.5H1920" stroke="rgba(0,0,0,0.065)" stroke-width="1" shape-rendering="crispEdges"/><path d="M501.5 124V1040M557.5 124V1040M614.5 124V1040M670.5 124V1040M726.5 124V1040M783.5 124V1040M839.5 124V1040M896.5 124V1040M952.5 124V1040M1008.5 124V1040M1065.5 124V1040M1121.5 124V1040M1178.5 124V1040M1234.5 124V1040M1291.5 124V1040M1347.5 124V1040M1403.5 124V1040M1460.5 124V1040M1516.5 124V1040M1573.5 124V1040M1629.5 124V1040M1685.5 124V1040M1742.5 124V1040M1798.5 124V1040M1855.5 124V1040M1911.5 124V1040M454 156.5H1920M454 213.5H1920M454 269.5H1920M454 326.5H1920M454 382.5H1920M454 438.5H1920M454 495.5H1920M454 551.5H1920M454 608.5H1920M454 664.5H1920M454 721.5H1920M454 777.5H1920M454 833.5H1920M454 890.5H1920M454 946.5H1920M454 1003.5H1920" stroke="#c0c0c0" stroke-width="1" shape-rendering="crispEdges"/><g>
<rect x="1019.2" y="565.4" width="319.2" height="110.2" rx="2.5" fill="#5a5a5a"/>
<rect x="1049.2" y="566" width="2.6" height="79.5" fill="#4b4b4b"/>
<rect x="1305.2" y="566" width="2.6" height="79.5" fill="#525252"/>
<path d="M1048.5 566V645.8H1308.5V566" fill="none" stroke="#9a9a9a" stroke-width="1.3"/>
<path d="M1046.6 646.5V675M1310.4 646.5V675" stroke="#606060" stroke-width="1"/>
<path d="M1178.5 566V645" stroke="#7a7a7a" stroke-width="1"/>
<rect x="1019.2" y="565.4" width="319.2" height="110.2" rx="2.5" fill="none" stroke="rgba(90,90,90,0.5)" stroke-width="1.2"/>
</g><circle cx="1178.2" cy="608" r="12" fill="rgba(35,175,245,0.9)"/><path d="M1178.2 608.0L927.40 173.60L1002.69 173.60Z" fill="rgba(130,130,130,0.31)"/><path d="M927.40 173.60L1178.2 608.0L1002.69 173.60" fill="none" stroke="rgba(140,140,140,0.8)" stroke-width="2.0" stroke-linejoin="round"/><path d="M1178.2 608.0L1353.71 173.60L1429.00 173.60Z" fill="rgba(130,130,130,0.31)"/><path d="M1353.71 173.60L1178.2 608.0L1429.00 173.60" fill="none" stroke="rgba(140,140,140,0.8)" stroke-width="2.0" stroke-linejoin="round"/><path d="M1178.2 608.0L950.20 608.00L950.20 690.99Z" fill="rgba(130,130,130,0.22)"/><path d="M950.20 608.00L1178.2 608.0L950.20 690.99" fill="none" stroke="rgba(140,140,140,0.8)" stroke-width="2.0" stroke-linejoin="round"/><path d="M1178.2 608.0L1406.00 608.00L1406.00 690.91Z" fill="rgba(130,130,130,0.22)"/><path d="M1406.00 608.00L1178.2 608.0L1406.00 690.91" fill="none" stroke="rgba(140,140,140,0.8)" stroke-width="2.0" stroke-linejoin="round"/><path d="M1178.2 608.0L862.30 923.90L995.82 923.90Z" fill="rgba(130,130,130,0.30)"/><path d="M862.30 923.90L1178.2 608.0L995.82 923.90" fill="none" stroke="rgba(140,140,140,0.8)" stroke-width="2.0" stroke-linejoin="round"/><path d="M1178.2 608.0L1360.58 923.90L1494.10 923.90Z" fill="rgba(130,130,130,0.30)"/><path d="M1360.58 923.90L1178.2 608.0L1494.10 923.90" fill="none" stroke="rgba(140,140,140,0.8)" stroke-width="2.0" stroke-linejoin="round"/><rect x="950.2" y="173.6" width="455.79999999999995" height="750.3" fill="none" stroke="#404040" stroke-width="2.4"/><path d="M1178.2 608.0L1019.90 173.60L1078.20 173.60Z" fill="rgba(248,156,64,0.25)"/><path d="M1019.90 173.60L1178.2 608.0L1078.20 173.60Z" fill="none" stroke="rgba(244,142,43,0.76)" stroke-width="2.0" stroke-linejoin="round"/><path d="M1178.2 608.0L1278.20 173.60L1336.50 173.60Z" fill="rgba(248,156,64,0.25)"/><path d="M1278.20 173.60L1178.2 608.0L1336.50 173.60Z" fill="none" stroke="rgba(244,142,43,0.76)" stroke-width="2.0" stroke-linejoin="round"/><path d="M1008.4 188.3H1349" stroke="#f7a050" stroke-width="2.2"/><circle cx="1008.4" cy="188.3" r="4" fill="#f7941d"/><path d="M983.0 225.0H996.0L989.5 236.0Z" fill="#000"/><path d="M1171.7 225.0H1184.7L1178.2 236.0Z" fill="#000"/><path d="M1360.3 225.0H1373.3L1366.8 236.0Z" fill="#000"/><path d="M946 601.4L957.6 608L946 614.6Z" fill="#000"/><path d="M1410.4 601.4L1398.8 608L1410.4 614.6Z" fill="#000"/><path d="M943.5 782H956.5L950 769Z" fill="#000"/><path d="M1399.5 782H1412.5L1406 769Z" fill="#000"/><path d="M990 549.2V630.6M1366.5 549.2V630.6" stroke="#f0f" stroke-width="2"/><path d="M1064.3 221L1073.3 230L1064.3 239L1055.3 230Z" fill="#4d4dff"/><path d="M1292.1 221L1301.1 230L1292.1 239L1283.1 230Z" fill="#4d4dff"/><circle cx="1063" cy="789" r="5" fill="#f0f" stroke="#000" stroke-width="1"/><circle cx="1293.5" cy="789" r="5" fill="#f0f" stroke="#000" stroke-width="1"/><circle cx="1178.2" cy="608" r="6.1" fill="#4a4a4a" stroke="#111" stroke-width="1.1"/><text x="995" y="219" font-family="'Liberation Sans', sans-serif" font-size="16" fill="#000" stroke="#fff" stroke-width="3" stroke-linejoin="round" paint-order="stroke">FL</text><text x="1182" y="219" font-family="'Liberation Sans', sans-serif" font-size="16" fill="#000" stroke="#fff" stroke-width="3" stroke-linejoin="round" paint-order="stroke">FC</text><text x="1371" y="219" font-family="'Liberation Sans', sans-serif" font-size="16" fill="#000" stroke="#fff" stroke-width="3" stroke-linejoin="round" paint-order="stroke">FR</text><text x="1016.8" y="207.5" font-family="'Liberation Sans', sans-serif" font-size="16" fill="#f98a24" stroke="#fff" stroke-width="3" stroke-linejoin="round" paint-order="stroke">Ecran</text><text x="1063" y="216" font-family="'Liberation Sans', sans-serif" font-size="16" fill="#4d4dff" stroke="#fff" stroke-width="3" stroke-linejoin="round" paint-order="stroke">Sub1</text><text x="1291" y="216" font-family="'Liberation Sans', sans-serif" font-size="16" fill="#4d4dff" stroke="#fff" stroke-width="3" stroke-linejoin="round" paint-order="stroke">Sub2</text><text x="1182.5" y="595.6" font-family="'Liberation Sans', sans-serif" font-size="16" fill="#4a4a4a" stroke="#fff" stroke-width="3" stroke-linejoin="round" paint-order="stroke">Moi</text><text x="955" y="597.6" font-family="'Liberation Sans', sans-serif" font-size="16" fill="#000" stroke="#fff" stroke-width="3" stroke-linejoin="round" paint-order="stroke">SL</text><text x="1409.8" y="597.6" font-family="'Liberation Sans', sans-serif" font-size="16" fill="#000" stroke="#fff" stroke-width="3" stroke-linejoin="round" paint-order="stroke">SR</text><text x="954.5" y="767" font-family="'Liberation Sans', sans-serif" font-size="16" fill="#000" stroke="#fff" stroke-width="3" stroke-linejoin="round" paint-order="stroke">SBL</text><text x="1409.8" y="767" font-family="'Liberation Sans', sans-serif" font-size="16" fill="#000" stroke="#fff" stroke-width="3" stroke-linejoin="round" paint-order="stroke">SBR</text><text x="1067" y="779" font-family="'Liberation Sans', sans-serif" font-size="16" fill="#f0f" stroke="#fff" stroke-width="3" stroke-linejoin="round" paint-order="stroke">TL</text><text x="1297" y="779" font-family="'Liberation Sans', sans-serif" font-size="16" fill="#f0f" stroke="#fff" stroke-width="3" stroke-linejoin="round" paint-order="stroke">TR</text><path d="M500.7 181.5H700.4" stroke="rgba(0,0,0,0.45)" stroke-width="5" stroke-linecap="round"/><circle cx="616.5" cy="181.5" r="8.6" fill="rgba(0,0,0,0.45)"/><circle cx="616.5" cy="181.5" r="6.4" fill="#000"/><text x="605.5" y="165.8" font-family="'Liberation Sans', sans-serif" font-size="16" fill="#222" stroke="#fff" stroke-width="3" stroke-linejoin="round" paint-order="stroke">Longueur = 665</text><path d="M500.7 237.75H700.4" stroke="rgba(0,0,0,0.45)" stroke-width="5" stroke-linecap="round"/><circle cx="551.1" cy="237.75" r="8.6" fill="rgba(0,0,0,0.45)"/><circle cx="551.1" cy="237.75" r="6.4" fill="#000"/><text x="540.1" y="222.05" font-family="'Liberation Sans', sans-serif" font-size="16" fill="#222" stroke="#fff" stroke-width="3" stroke-linejoin="round" paint-order="stroke">Largeur = 404</text><path d="M500.7 294.0H700.4" stroke="rgba(0,0,0,0.45)" stroke-width="5" stroke-linecap="round"/><circle cx="529" cy="294.0" r="8.6" fill="rgba(0,0,0,0.45)"/><circle cx="529" cy="294.0" r="6.4" fill="#000"/><text x="518" y="278.3" font-family="'Liberation Sans', sans-serif" font-size="16" fill="#222" stroke="#fff" stroke-width="3" stroke-linejoin="round" paint-order="stroke">Hauteur = 200</text><path d="M500.7 350.25H700.4" stroke="rgba(0,0,0,0.45)" stroke-width="5" stroke-linecap="round"/><circle cx="612.5" cy="350.25" r="8.6" fill="rgba(0,0,0,0.45)"/><circle cx="612.5" cy="350.25" r="6.4" fill="#000"/><text x="601.5" y="334.55" font-family="'Liberation Sans', sans-serif" font-size="16" fill="#222" stroke="#fff" stroke-width="3" stroke-linejoin="round" paint-order="stroke">MaPosition = 280</text><path d="M500.7 406.5H700.4" stroke="rgba(250,150,60,0.5)" stroke-width="5" stroke-linecap="round"/><circle cx="500.1" cy="406.5" r="8.6" fill="rgba(250,150,60,0.5)"/><circle cx="500.1" cy="406.5" r="5.9" fill="#fb8423" stroke="#222" stroke-width="1.2"/><text x="489.1" y="390.8" font-family="'Liberation Sans', sans-serif" font-size="16" fill="#f98a24" stroke="#fff" stroke-width="3" stroke-linejoin="round" paint-order="stroke">FormatEcran = 1.78</text><path d="M500.7 462.75H700.4" stroke="rgba(0,0,0,0.45)" stroke-width="5" stroke-linecap="round"/><circle cx="700.4" cy="462.75" r="8.6" fill="rgba(0,0,0,0.45)"/><circle cx="700.4" cy="462.75" r="6.4" fill="#000"/><text x="689.4" y="447.05" font-family="'Liberation Sans', sans-serif" font-size="16" fill="#222" stroke="#fff" stroke-width="3" stroke-linejoin="round" paint-order="stroke">NbMain = 7</text><path d="M500.7 519.0H700.4" stroke="rgba(0,0,0,0.45)" stroke-width="5" stroke-linecap="round"/><circle cx="700.4" cy="519.0" r="8.6" fill="rgba(0,0,0,0.45)"/><circle cx="700.4" cy="519.0" r="6.4" fill="#000"/><text x="689.4" y="503.3" font-family="'Liberation Sans', sans-serif" font-size="16" fill="#222" stroke="#fff" stroke-width="3" stroke-linejoin="round" paint-order="stroke">PositionFC</text><path d="M500.7 575.25H700.4" stroke="rgba(0,0,0,0.45)" stroke-width="5" stroke-linecap="round"/><circle cx="553.6" cy="575.25" r="8.6" fill="rgba(0,0,0,0.45)"/><circle cx="553.6" cy="575.25" r="6.4" fill="#000"/><text x="542.6" y="559.55" font-family="'Liberation Sans', sans-serif" font-size="16" fill="#222" stroke="#fff" stroke-width="3" stroke-linejoin="round" paint-order="stroke">HauteurOreille = 90</text><path d="M500.7 631.5H700.4" stroke="rgba(0,0,0,0.45)" stroke-width="5" stroke-linecap="round"/><circle cx="500.1" cy="631.5" r="8.6" fill="rgba(0,0,0,0.45)"/><circle cx="500.1" cy="631.5" r="6.4" fill="#000"/><text x="489.1" y="615.8" font-family="'Liberation Sans', sans-serif" font-size="16" fill="#222" stroke="#fff" stroke-width="3" stroke-linejoin="round" paint-order="stroke">HauteurFront = 50</text><path d="M500.7 687.75H700.4" stroke="rgba(0,0,0,0.45)" stroke-width="5" stroke-linecap="round"/><circle cx="700.4" cy="687.75" r="11.5" fill="rgba(0,0,0,0.45)"/><circle cx="700.4" cy="687.75" r="6.4" fill="#000"/><text x="689.4" y="672.05" font-family="'Liberation Sans', sans-serif" font-size="16" fill="#222" stroke="#fff" stroke-width="3" stroke-linejoin="round" paint-order="stroke">HauteurSurround = 200</text><path d="M500.7 744.0H700.4" stroke="rgba(40,40,240,0.48)" stroke-width="5" stroke-linecap="round"/><circle cx="700.4" cy="744.0" r="8.6" fill="rgba(40,40,240,0.48)"/><circle cx="700.4" cy="744.0" r="5.9" fill="#1a0af5" stroke="#111" stroke-width="1.2"/><text x="689.4" y="728.3" font-family="'Liberation Sans', sans-serif" font-size="16" fill="#2a1af0" stroke="#fff" stroke-width="3" stroke-linejoin="round" paint-order="stroke">NbSub = 2</text><path d="M500.7 800.25H700.4" stroke="rgba(40,40,240,0.48)" stroke-width="5" stroke-linecap="round"/><circle cx="600.2" cy="800.25" r="8.6" fill="rgba(40,40,240,0.48)"/><circle cx="600.2" cy="800.25" r="5.9" fill="#1a0af5" stroke="#111" stroke-width="1.2"/><text x="589.2" y="784.55" font-family="'Liberation Sans', sans-serif" font-size="16" fill="#2a1af0" stroke="#fff" stroke-width="3" stroke-linejoin="round" paint-order="stroke">PositionSubs</text><path d="M500.7 856.5H700.4" stroke="rgba(255,0,255,0.42)" stroke-width="5" stroke-linecap="round"/><circle cx="566.9" cy="856.5" r="8.6" fill="rgba(255,0,255,0.42)"/><circle cx="566.9" cy="856.5" r="5.9" fill="#f0f" stroke="#111" stroke-width="1.2"/><text x="555.9" y="840.8" font-family="'Liberation Sans', sans-serif" font-size="16" fill="#f0f" stroke="#fff" stroke-width="3" stroke-linejoin="round" paint-order="stroke">NbTop = 2</text></svg><div style="position:absolute;left:1875px;top:124px;width:45px;height:42px;background:#fff;border-radius:0 0 0 5px;box-shadow:-0.5px 0.5px 1.5px rgba(0,0,0,.25)"></div><svg style="position:absolute;left:1875px;top:124px" width="45" height="42" viewBox="0 0 45 42"><g fill="#999"><path d="M8 11.1H28L27 13.8H8Z"/><path d="M8 19.3H17.6L16.6 21.9H8Z"/><path d="M8 28.2H17.3L18.5 30.8H8Z"/></g><circle cx="24.5" cy="24.3" r="6.1" fill="#9999ff" stroke="#333" stroke-width="0.9"/><path d="M30.5 10.4L38.4 24.6H22.8Z" fill="#9999ff" stroke="#333" stroke-width="0.9" stroke-linejoin="round"/><path d="M30.5 10.4L38.4 24.6H22.8Z" fill="none"/><path d="M25.5 24.6H30.6A6.1 6.1 0 0 0 27.9 19.3Z" fill="#6666ff" stroke="#333" stroke-width="0.9"/></svg><div style="position:absolute;left:1868px;top:856px;width:36px;height:36px;border-radius:50%;background:#fff;box-shadow:0 1px 3px rgba(0,0,0,.25)"></div><div style="position:absolute;left:1868px;top:900px;width:36px;height:36px;border-radius:50%;background:#fff;box-shadow:0 1px 3px rgba(0,0,0,.25)"></div><div style="position:absolute;left:1868px;top:944px;width:36px;height:36px;border-radius:50%;background:#fff;box-shadow:0 1px 3px rgba(0,0,0,.25)"></div><div style="position:absolute;left:1868px;top:988px;width:36px;height:36px;border-radius:50%;background:#fff;box-shadow:0 1px 3px rgba(0,0,0,.25)"></div><svg style="position:absolute;left:1866px;top:854px" width="40" height="176" viewBox="1866 854 40 176"><path d="M1886 866.5L1877.7 874H1880.3V880.5H1884.3V876H1887.7V880.5H1891.7V874H1894.3Z" fill="#666"/><circle cx="1884" cy="916" r="5.8" fill="none" stroke="#666" stroke-width="1.8"/><path d="M1888.3 920.3L1893.5 925.5" stroke="#666" stroke-width="2"/><path d="M1884 913V919M1881 916H1887" stroke="#666" stroke-width="1.3"/><circle cx="1884" cy="960" r="5.8" fill="none" stroke="#666" stroke-width="1.8"/><path d="M1888.3 964.3L1893.5 969.5" stroke="#666" stroke-width="2"/><path d="M1881 960H1887" stroke="#666" stroke-width="1.3"/><path d="M1879.5 1003.5V999.5H1883.5M1888.5 999.5H1892.5V1003.5M1892.5 1008.5V1012.5H1888.5M1883.5 1012.5H1879.5V1008.5" fill="none" stroke="#666" stroke-width="1.8"/></svg><div style="position:absolute;left:0;top:1040px;width:1920px;height:2px;background:#2e2e2e"></div><div style="position:absolute;left:0;top:1040px;width:48px;height:2px;background:#3b3029"></div><div style="position:absolute;left:48px;top:1040px;width:344px;height:2px;background:#dcdcdc"></div><div style="position:absolute;left:687px;top:1040px;width:49px;height:2px;background:#565656"></div><div style="position:absolute;left:736px;top:1040px;width:48px;height:2px;background:#b9692b"></div>
</body></html>
